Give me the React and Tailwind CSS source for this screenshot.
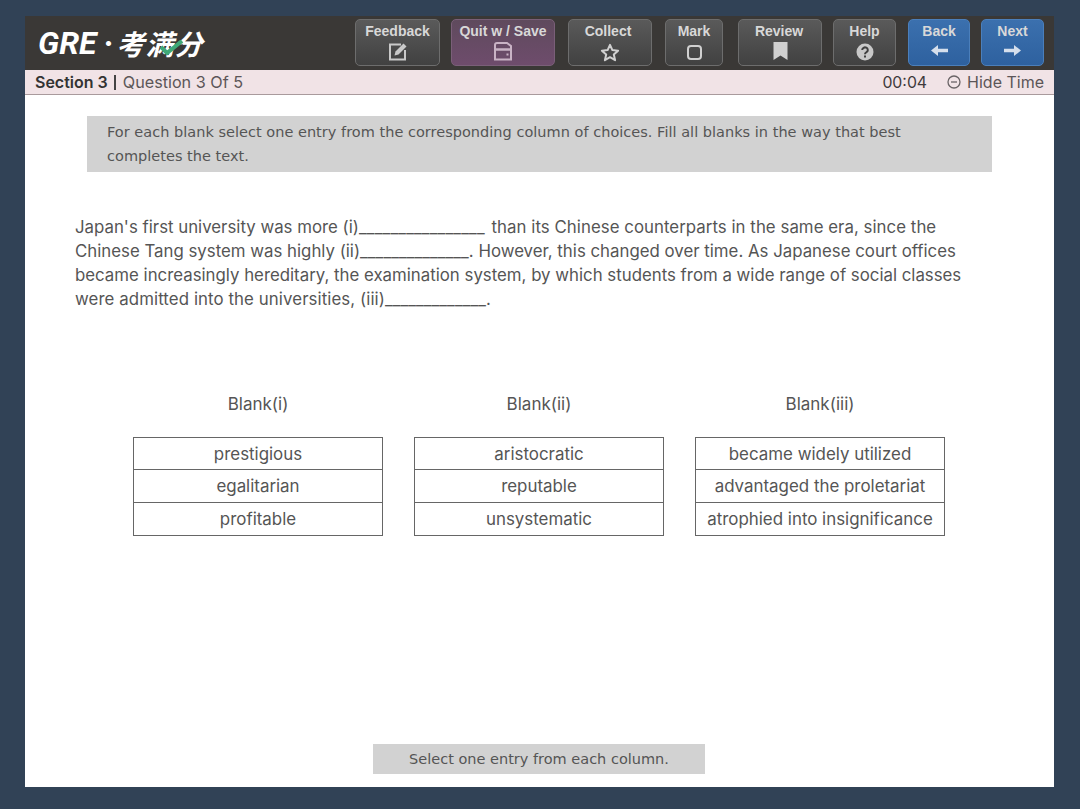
import React from "react";

const Edit = () => (
  <svg width="20" height="19" viewBox="0 0 20 19" fill="none" stroke="#c9c9c9" strokeWidth="2" className="-mt-[2px]">
    <path d="M13 2.500H2v15h15V8" />
    <path d="M6.500 13.500l1-4 8-8 3 3-8 8z" fill="#c9c9c9" stroke="none" />
  </svg>
);
const Disk = () => (
  <svg width="20" height="19" viewBox="0 0 20 19" fill="none" stroke="#c9b3c5" strokeWidth="2" className="-mt-[1px]">
    <path d="M2 3a2 2 0 0 1 2-2h10l4 3v13.500H2z" />
    <path d="M2 7.500h16" strokeWidth="2.500" />
    <rect x="13.500" y="11.500" width="2" height="2" fill="#c9b3c5" stroke="none" />
  </svg>
);
const Star = () => (
  <svg width="20" height="19" viewBox="0 0 20 19" fill="none" stroke="#d0d0d0" strokeWidth="2" strokeLinejoin="round">
    <path d="M10 1.800l2.400 5.300 5.700.6-4.300 3.800 1.300 5.700-5.100-3-5.100 3 1.300-5.700-4.300-3.800 5.700-.6z" />
  </svg>
);
const Square = () => (
  <svg width="17" height="17" viewBox="0 0 17 17" fill="none" stroke="#d0d0d0" strokeWidth="2">
    <rect x="2" y="2" width="13" height="13" rx="3" />
  </svg>
);
const Bookmark = () => (
  <svg width="15" height="18" viewBox="0 0 15 18" fill="#d0d0d0" className="-mt-[2px]">
    <path d="M0.500 0h14v18l-7-4.500-7 4.500z" />
  </svg>
);
const HelpIcon = () => (
  <svg width="18" height="18" viewBox="0 0 18 18">
    <circle cx="9" cy="9" r="8.500" fill="#c8c8c8" />
    <path d="M6.200 7a2.800 2.600 0 1 1 4.300 2.200c-1 .7-1.500 1-1.500 2" fill="none" stroke="#3f3f3f" strokeWidth="2" />
    <rect x="8" y="12.500" width="2" height="2" fill="#3f3f3f" />
  </svg>
);
const Arrow = ({ flip }) => (
  <svg width="17" height="11" viewBox="0 0 17 11" fill="#d5dfec" className={flip ? "rotate-180 -mt-[4px]" : "-mt-[4px]"}>
    <path d="M0 3.700h10V0l7 5.500-7 5.500V7.300H0z" />
  </svg>
);

const TB = ({ label, width, variant = "gray", shift = "", children }) => {
  const styles = {
    gray: "border-[#6d6d6d] bg-gradient-to-b from-[#5a5a5a] to-[#414141]",
    purple: "border-[#7a5f78] bg-gradient-to-b from-[#5f4a5d] to-[#6e4c6c]",
    blue: "border-[#4b7fbb] bg-gradient-to-b from-[#3b70ae] to-[#2e619f]",
  };
  return (
    <div className={`${width} h-[47px] shrink-0 rounded-[5px] border flex flex-col items-center pt-[3px] ${styles[variant]}`}>
      <span className={`text-[14px] leading-[17px] font-bold text-[#d8d8d8] whitespace-nowrap [font-family:'Liberation_Sans',sans-serif] ${shift}`}>{label}</span>
      <span className="h-[22px] flex items-center justify-center mt-[1px]">{children}</span>
    </div>
  );
};

const Column = ({ title, items }) => (
  <div className="w-[250px] flex flex-col items-center">
    <div className="h-[24px] leading-[24px] text-[#555] text-[17px]">{title}</div>
    <div className="mt-[21px] w-full border border-[#666] border-b-0">
      {items.map((t, i) => (
        <div key={t} className={`${i === 0 ? "h-[32px]" : "h-[33px]"} pt-[2px] flex items-center justify-center border-b border-[#666] text-[#555] text-[16.900px] whitespace-nowrap`}>
          {t}
        </div>
      ))}
    </div>
  </div>
);

export default function App() {
  return (
    <div className="w-[1080px] h-[809px] bg-[#314256] pt-[16px] px-[25px] overflow-hidden [font-family:Inter,'Noto_Sans',sans-serif]">
      <div className="w-[1029px] h-[771px] bg-white flex flex-col">
        <header className="h-[54px] shrink-0 bg-[#3a3836] flex items-start pt-[3px] pl-[14px] pr-[9px]">
          <div className="relative w-[316px] h-[48px] flex items-center text-white whitespace-nowrap [font-family:'Noto_Sans_CJK_SC','Noto_Sans',sans-serif]">
            <span className="text-[32px] font-bold italic leading-none -ml-[1px] [font-family:Roboto,sans-serif]">GRE</span>
            <span className="text-[20px] font-bold ml-[2px] mr-[-2px] leading-none">·</span>
            <span className="text-[28px] font-bold italic leading-none tracking-[1px]">考满分</span>
            <svg className="absolute left-[121px] top-[21px]" width="24" height="15" viewBox="0 0 24 15" fill="none" stroke="#3fa877" strokeWidth="4">
              <path d="M1 7l6 6L22 1" />
            </svg>
          </div>
          <div className="flex">
            <TB label="Feedback" width="w-[85px]"><Edit /></TB>
            <div className="w-[11px]" />
            <TB label="Quit w / Save" width="w-[104px]" variant="purple" shift="text-[13.700px]"><Disk /></TB>
            <div className="w-[13px]" />
            <TB label="Collect" width="w-[84px]" shift="-ml-[4px]"><Star /></TB>
            <div className="w-[13px]" />
            <TB label="Mark" width="w-[58px]"><Square /></TB>
            <div className="w-[15px]" />
            <TB label="Review" width="w-[84px]" shift="-ml-[2px]"><Bookmark /></TB>
            <div className="w-[11px]" />
            <TB label="Help" width="w-[63px]"><HelpIcon /></TB>
            <div className="w-[12px]" />
            <TB label="Back" width="w-[62px]" variant="blue"><Arrow flip /></TB>
            <div className="w-[11px]" />
            <TB label="Next" width="w-[63px]" variant="blue"><Arrow /></TB>
          </div>
        </header>

        <div className="h-[25px] shrink-0 bg-[#f1e3e6] border-b border-[#a99a9c] flex items-center pl-[10px] pr-[10px] text-[16.200px] text-[#5c5658]">
          <span className="font-semibold text-[16px] text-[#333]">Section 3</span>
          <span className="ml-[6px] mr-[7px] w-[2px] h-[15px] bg-[#444]" />
          <span>Question 3 Of 5</span>
          <span className="ml-auto text-[15.800px] mt-[1px] text-[#3f3a3c]">00:04</span>
          <svg className="ml-[20px]" width="14" height="14" viewBox="0 0 14 14" fill="none" stroke="#6a6466" strokeWidth="1.300">
            <circle cx="7" cy="7" r="6" />
            <path d="M4 7h6" />
          </svg>
          <span className="ml-[6px] text-[16px]">Hide Time</span>
        </div>

        <div className="flex-1 flex flex-col items-start">
          <div className="ml-[62px] mt-[21px] w-[905px] h-[56px] bg-[#d2d2d2] pl-[20px] pt-[4px] text-[14.500px] leading-[24px] text-[#555] tracking-[0.020px] [font-family:'DejaVu_Sans',sans-serif]">
            <div className="whitespace-nowrap">For each blank select one entry from the corresponding column of choices. Fill all blanks in the way that best</div>
            <div>completes the text.</div>
          </div>

          <p className="ml-[50px] mt-[43px] text-[16.820px] leading-[24px] text-[#555] whitespace-nowrap">
            Japan's first university was more (i)<span className="tracking-[0.200px]">________________</span><span className="ml-[2px] tracking-[0.040px]"> than its Chinese counterparts in the same era, since the</span><br />
            Chinese Tang system was highly (ii)<span className="tracking-[0.100px]">______________</span>. However, this changed over time. As Japanese court offices<br />
            became increasingly hereditary, the examination system, by which students from a wide range of social classes<br />
            <span className="tracking-[0.090px]">were admitted into the universities, (iii)</span><span className="tracking-[0.100px]">_____________</span>.
          </p>

          <div className="ml-[108px] mt-[81px] flex gap-[31px]">
            <Column title="Blank(i)" items={["prestigious", "egalitarian", "profitable"]} />
            <Column title="Blank(ii)" items={["aristocratic", "reputable", "unsystematic"]} />
            <Column title="Blank(iii)" items={["became widely utilized", "advantaged the proletariat", "atrophied into insignificance"]} />
          </div>

          <div className="ml-[348px] mt-[208px] w-[332px] h-[30px] pt-[2px] bg-[#d2d2d2] flex items-center justify-center text-[14.500px] text-[#555] [font-family:'DejaVu_Sans',sans-serif]">
            Select one entry from each column.
          </div>
        </div>
      </div>
    </div>
  );
}
